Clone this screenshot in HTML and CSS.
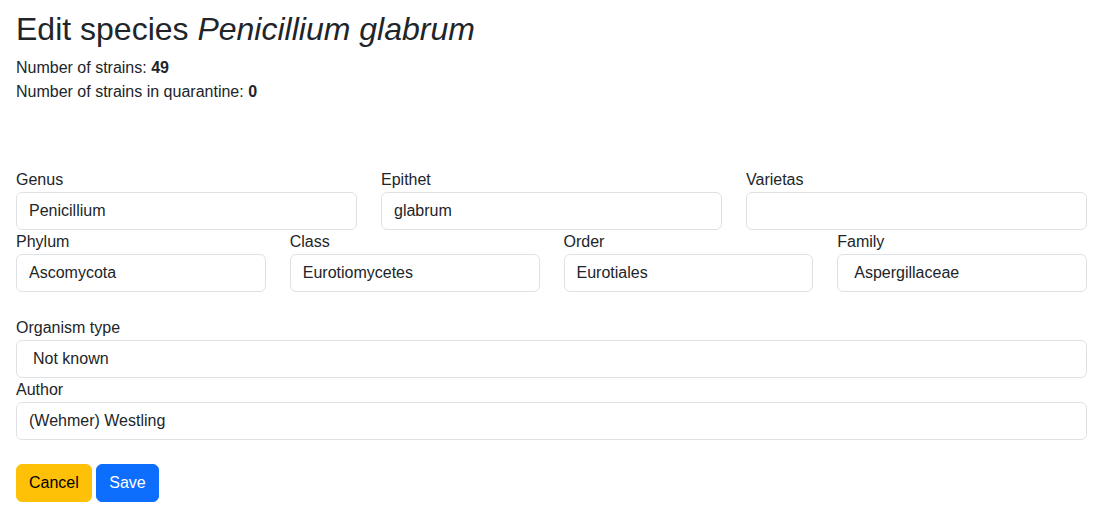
FILE: index.html
```html
<!DOCTYPE html>
<html lang="en">
<head>
<meta charset="utf-8">
<title>Edit species</title>
<link rel="stylesheet" href="styles.css">
</head>
<body>
<main class="page">
  <h2 class="title">Edit species <i>Penicillium glabrum</i></h2>
  <p class="stat">Number of strains: <b>49</b></p>
  <p class="stat">Number of strains in quarantine: <b>0</b></p>

  <form class="form">
    <div class="row cols-3">
      <div class="field">
        <label class="label" for="genus">Genus</label>
        <input class="control" id="genus" type="text" value="Penicillium">
      </div>
      <div class="field">
        <label class="label" for="epithet">Epithet</label>
        <input class="control" id="epithet" type="text" value="glabrum">
      </div>
      <div class="field">
        <label class="label" for="varietas">Varietas</label>
        <input class="control" id="varietas" type="text" value="">
      </div>
    </div>
    <div class="row cols-4">
      <div class="field">
        <label class="label" for="phylum">Phylum</label>
        <input class="control" id="phylum" type="text" value="Ascomycota">
      </div>
      <div class="field">
        <label class="label" for="class">Class</label>
        <input class="control" id="class" type="text" value="Eurotiomycetes">
      </div>
      <div class="field">
        <label class="label" for="order">Order</label>
        <input class="control" id="order" type="text" value="Eurotiales">
      </div>
      <div class="field">
        <label class="label" for="family">Family</label>
        <select class="control select" id="family"><option>Aspergillaceae</option></select>
      </div>
    </div>

    <div class="row cols-1 spaced">
      <div class="field">
        <label class="label" for="otype">Organism type</label>
        <select class="control select" id="otype"><option>Not known</option></select>
      </div>
    </div>
    <div class="row cols-1">
      <div class="field">
        <label class="label" for="author">Author</label>
        <input class="control" id="author" type="text" value="(Wehmer) Westling">
      </div>
    </div>

    <div class="actions">
      <button type="button" class="btn btn-warning">Cancel</button>
      <button type="submit" class="btn btn-primary">Save</button>
    </div>
  </form>
</main>
</body>
</html>
```

FILE: styles.css
```css
* { box-sizing: border-box; }
html, body { margin: 0; padding: 0; }
body {
  font-family: "Liberation Sans", Arial, sans-serif;
  font-size: 16px;
  line-height: 24px;
  color: #212529;
  background: #fff;
}
.page {
  padding: 10px 12px 0 16px;
}
.title {
  margin: 0 0 8px;
  font-size: 32px;
  font-weight: 400;
  line-height: 38.4px;
}
.stat { margin: 0; }
.stat b { font-weight: 700; }
.form { margin-top: 64px; }
.row { display: grid; column-gap: 24px; }
.cols-3 { grid-template-columns: repeat(3, 1fr); }
.cols-4 { grid-template-columns: repeat(4, 1fr); }
.cols-1 { grid-template-columns: 1fr; }
.spaced { margin-top: 24px; }
.field { display: flex; flex-direction: column; min-width: 0; }
.label { display: block; line-height: 24px; }
.control {
  display: block;
  width: 100%;
  height: 38px;
  padding: 6px 12px;
  font: inherit;
  line-height: 24px;
  color: #212529;
  background: #fff;
  border: 1px solid #dee2e6;
  border-radius: 6px;
  outline: none;
}
.select {
  appearance: none;
  -webkit-appearance: none;
  padding-left: 16px;
}
.actions { margin-top: 24px; }
.btn {
  display: inline-block;
  vertical-align: top;
  height: 38px;
  padding: 6px 12px;
  font: inherit;
  line-height: 24px;
  border: 1px solid transparent;
  border-radius: 6px;
  cursor: pointer;
}
.btn-warning { background: #ffc107; border-color: #ffc107; color: #000; }
.btn-primary { background: #0d6efd; border-color: #0d6efd; color: #fff; }
```
